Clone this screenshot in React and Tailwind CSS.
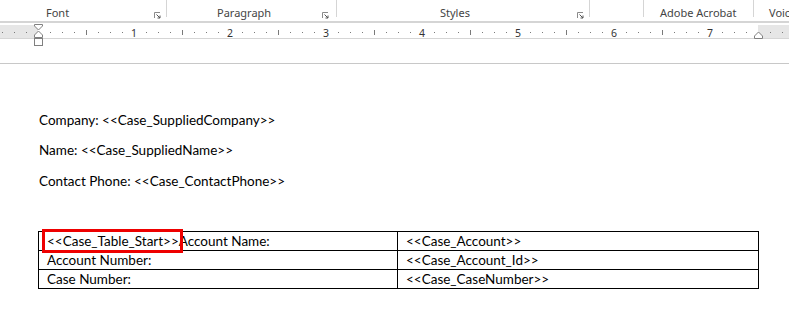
import React from 'react';

const groups = [
    { w: 166, label: 'Font', pl: 46, launcher: true },
    { w: 169, label: 'Paragraph', pl: 50, launcher: true, mr: 7 },
    { w: 252, label: 'Styles', pl: 103, launcher: true },
    { w: 53, label: '', pl: 0 },
    { w: 109, label: 'Adobe Acrobat', pl: 16 },
    { w: 40, label: 'Voice', pl: 15, last: true },
];

const rows = [
    { left: '<<Case_Table_Start>>Account Name:', right: '<<Case_Account>>' },
    { left: 'Account Number:', right: '<<Case_Account_Id>>' },
    { left: 'Case Number:', right: '<<Case_CaseNumber>>' },
];

const Launcher = ({ mr = 5 }) => (
    <svg width="7" height="7" viewBox="0 0 7 7" className="mt-[12px] ml-auto shrink-0" style={{ marginRight: mr }}>
        <path d="M0.5 6V0.5H6" fill="none" stroke="#8a8a8a" strokeWidth="1" />
        <path d="M2.5 2.5L6 6M6 3.5V6H3.5" fill="none" stroke="#555" strokeWidth="1" />
    </svg>
);

const Ribbon = () => (
    <div className="flex h-[21px] bg-white overflow-hidden">
        {groups.map((g, i) => (
            <React.Fragment key={i}>
                <div className="flex shrink-0 h-full" style={{ width: g.w }}>
                    <span className="pt-[5px] text-[11px] leading-4 text-[#444] whitespace-nowrap" style={{ paddingLeft: g.pl }}>{g.label}</span>
                    {g.launcher && <Launcher mr={g.mr} />}
                </div>
                {!g.last && <div className="w-px h-[17px] bg-[#d5d5d5] shrink-0" />}
            </React.Fragment>
        ))}
    </div>
);

const Ruler = () => {
    const ticks = [];
    for (let k = -3; k <= 62; k++) {
        const x = 38 + k * 12;
        if (k > 0 && k % 8 === 0) continue;
        if (k % 4 === 0 && k > 0 && k < 60) {
            ticks.push(<rect key={k} x={x} y={30} width={1} height={5} fill="#7a7a7a" />);
        } else if (k !== 0 && k !== 60) {
            ticks.push(<rect key={k} x={x} y={32} width={1} height={1} fill="#7a7a7a" />);
        }
    }
    const nums = [1, 2, 3, 4, 5, 6, 7];
    return (
        <div className="relative h-[42px]">
            <div className="h-[2px] bg-[#d5d5d5]" />
            <div className="flex h-[14px] mt-[2px] border-b border-[#d5d5d5]">
                <div className="w-[38px] bg-[#e6e6e6]" />
                <div className="w-[720px] bg-white" />
                <div className="flex-1 bg-[#e6e6e6]" />
            </div>
            <svg width="789" height="42" viewBox="0 21 789 42" className="absolute left-0 top-0">
                {ticks}
                {nums.map((n) => (
                    <text key={n} x={38 + n * 96} y={37} textAnchor="middle" fontSize="10.5" fill="#333" fontFamily="'Noto Sans', sans-serif">{n}</text>
                ))}
                <path d="M34.5 24.5H42.5V26L38.5 30L34.5 26Z" fill="#fff" stroke="#808080" />
                <path d="M34.5 37.5V35L38.5 31L42.5 35V37.5Z" fill="#fff" stroke="#808080" />
                <rect x="34.5" y="38.5" width="8" height="7" fill="#fff" stroke="#808080" />
                <path d="M754.5 38.5V36L758.5 32L762.5 36V38.5Z" fill="#fff" stroke="#808080" />
            </svg>
        </div>
    );
};

export default function App() {
    return (
        <div className="w-[789px] h-[320px] bg-white overflow-hidden relative" style={{ fontFamily: "'Noto Sans', sans-serif" }}>
            <Ribbon />
            <Ruler />
            <div className="h-px bg-[#c8c8c8]" />
            <div className="pl-[39px] pt-[46px] text-[13.5px] text-black" style={{ fontFamily: "'Lato', sans-serif" }}>
                <p className="h-[20px] leading-[20px] mb-[10px]">Company: &lt;&lt;Case_SuppliedCompany&gt;&gt;</p>
                <p className="h-[20px] leading-[20px] mb-[11px]">Name: &lt;&lt;Case_SuppliedName&gt;&gt;</p>
                <p className="h-[20px] leading-[20px]">Contact Phone: &lt;&lt;Case_ContactPhone&gt;&gt;</p>
            </div>
            <div className="relative ml-[38px] mt-[40px] w-[721px]" style={{ fontFamily: "'Lato', sans-serif" }}>
                <table className="w-full border-collapse text-[13.5px] text-black">
                    <tbody>
                        {rows.map((r, i) => (
                            <tr key={i} className="h-[19px]">
                                <td className="w-[359px] border border-black pl-[8px] py-0 leading-[17px] whitespace-nowrap">{r.left}</td>
                                <td className="border border-black pl-[8px] py-0 leading-[17px] whitespace-nowrap">{r.right}</td>
                            </tr>
                        ))}
                    </tbody>
                </table>
                <div className="absolute left-[4px] top-[-2px] w-[141px] h-[24px] border-[3px] border-[#ee0000]" />
            </div>
        </div>
    );
}
